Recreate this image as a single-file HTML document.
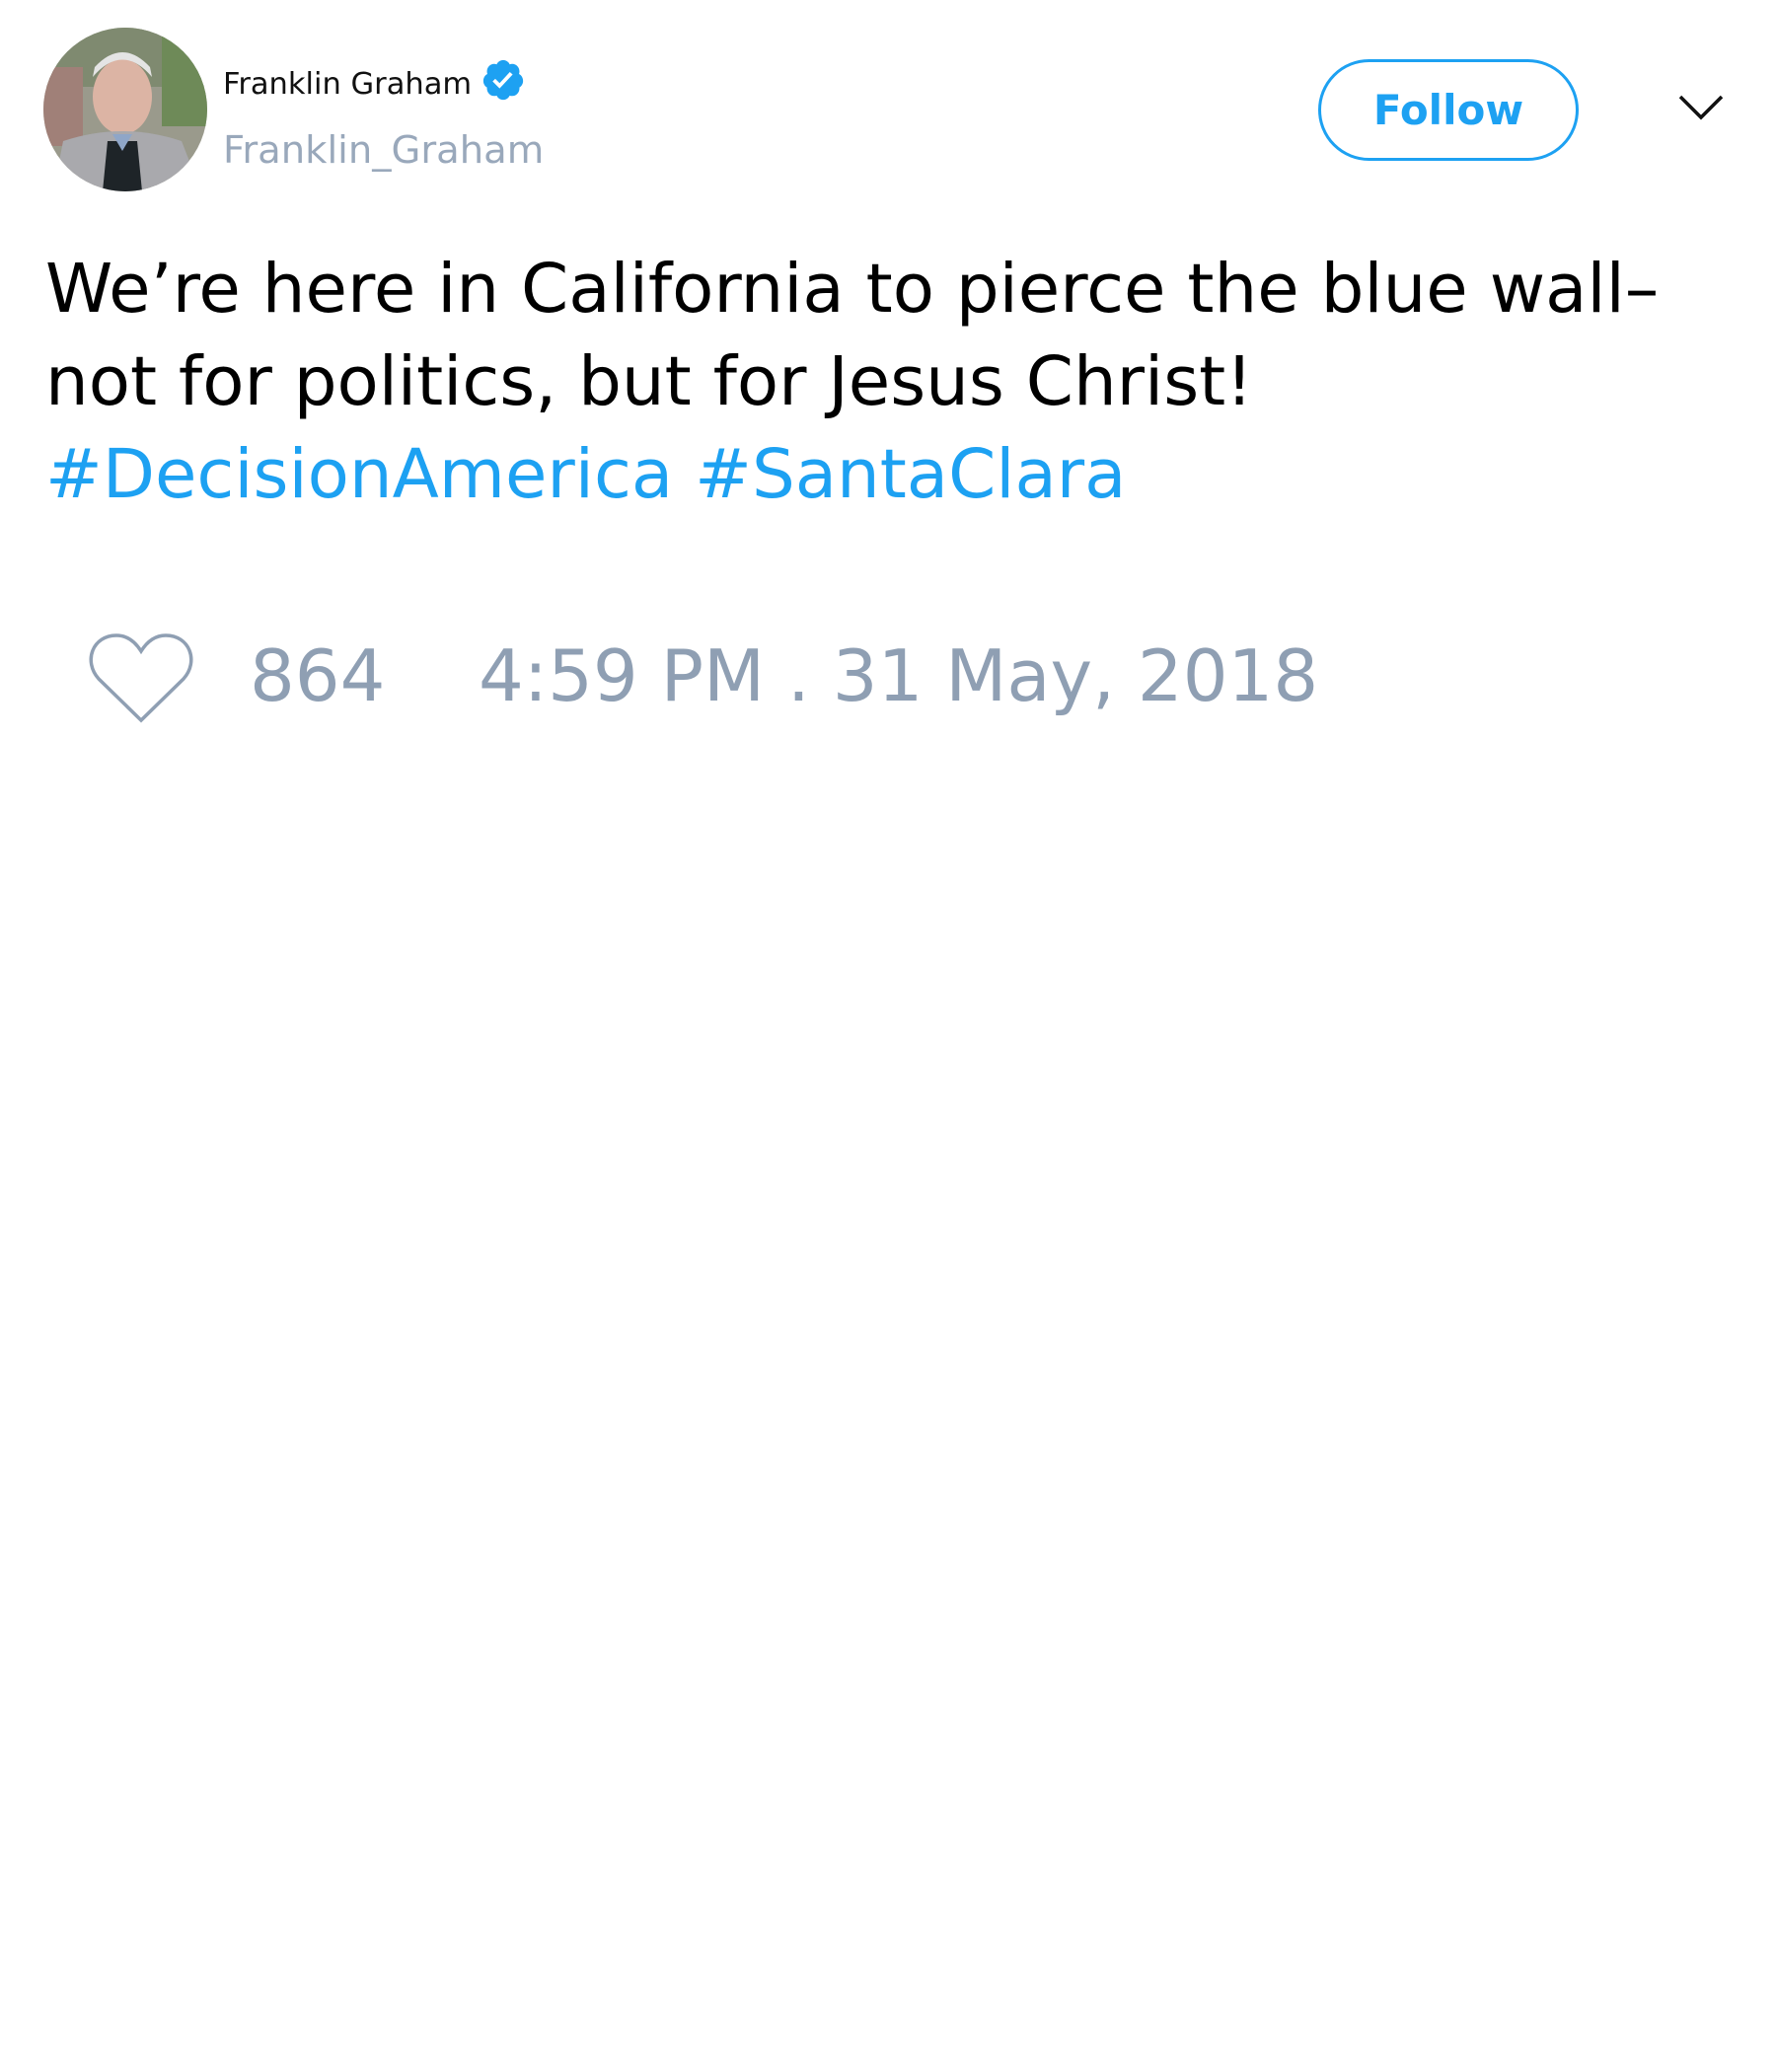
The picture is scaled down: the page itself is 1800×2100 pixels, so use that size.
<!DOCTYPE html>
<html><head><meta charset="utf-8"><style>
body{margin:0;width:1800px;height:2100px;background:#fff;font-family:"DejaVu Sans","Liberation Sans",sans-serif;position:relative;overflow:hidden}
.a{position:absolute;white-space:nowrap}
</style></head><body>
<svg class="a" style="left:44px;top:28px" width="166" height="166" viewBox="0 0 166 166">
<defs><clipPath id="c"><circle cx="83" cy="83" r="83"/></clipPath></defs>
<g clip-path="url(#c)">
<rect width="166" height="166" fill="#9a9a8c"/>
<rect x="0" y="0" width="166" height="60" fill="#7f8a70"/>
<rect x="120" y="0" width="46" height="100" fill="#6e8a58"/>
<rect x="0" y="40" width="40" height="80" fill="#a08078"/>
<ellipse cx="80" cy="70" rx="30" ry="38" fill="#dcb4a4"/>
<path d="M50 50 Q80 15 110 50 L108 40 Q80 10 52 40Z" fill="#e4e4e4"/>
<path d="M10 166 L20 115 Q80 95 140 115 L160 166Z" fill="#a9a9ad"/>
<path d="M60 166 L65 115 L95 115 L100 166Z" fill="#1e2428"/>
<path d="M70 108 L80 125 L90 108Z" fill="#8fa6c8"/>
</g></svg>
<div class="a" style="left:226px;top:68px;font-size:30.5px;color:#111">Franklin Graham</div>
<svg class="a" style="left:487px;top:58px" width="46" height="46" viewBox="0 0 24 24"><path fill="#1da1f2" d="M22.5 12.5c0-1.58-.875-2.95-2.148-3.6.154-.435.238-.905.238-1.4 0-2.210-1.71-3.998-3.818-3.998-.47 0-.92.084-1.336.25C14.818 2.415 13.51 1.5 12 1.5s-2.816.917-3.437 2.25c-.415-.165-.866-.25-1.336-.25-2.11 0-3.818 1.790-3.818 4 0 .494.083.964.237 1.4-1.272.65-2.147 2.018-2.147 3.600 0 1.495.782 2.798 1.942 3.486-.02.17-.032.34-.032.514 0 2.21 1.708 4 3.818 4 .47 0 .92-.086 1.335-.25.62 1.334 1.926 2.25 3.437 2.25 1.512 0 2.818-.916 3.437-2.25.415.163.865.248 1.336.248 2.11 0 3.818-1.79 3.818-4 0-.174-.012-.344-.033-.513 1.158-.687 1.943-1.99 1.943-3.484z"/><path fill="#fff" d="M10.1 16.5l-3.7-3.7 1.4-1.4 2.3 2.3 5.4-5.9 1.5 1.3z"/></svg>
<div class="a" style="left:226px;top:130px;font-size:38.5px;color:#99a8bb">Franklin_Graham</div>
<div class="a" style="left:1336px;top:60px;width:258px;height:97px;border:3px solid #1da1f2;border-radius:52px;color:#1da1f2;font-weight:bold;font-size:42px;line-height:97px;text-align:center">Follow</div>
<svg class="a" style="left:1700px;top:95px" width="48" height="30" viewBox="0 0 48 30"><path d="M3 3 L24 24 L45 3" fill="none" stroke="#111" stroke-width="3.5"/></svg>
<div class="a" style="left:46px;top:246px;font-size:69px;line-height:94px;color:#000">We’re here in California to pierce the blue wall–<br>not for politics, but for Jesus Christ!<br><span style="color:#1da1f2">#DecisionAmerica #SantaClara</span></div>
<svg class="a" style="left:90px;top:640px" width="106" height="94" viewBox="0 0 106 94"><path d="M53 90 L10 48 C-6 30 4 4 28 4 C40 4 48 12 53 20 C58 12 66 4 78 4 C102 4 112 30 96 48 Z" fill="none" stroke="#8f9fb3" stroke-width="3.5"/></svg>
<div class="a" style="left:253px;top:643px;font-size:72px;color:#8f9fb3">864</div>
<div class="a" style="left:485px;top:643px;font-size:72px;color:#8f9fb3">4:59 PM . 31 May, 2018</div>
</body></html>
